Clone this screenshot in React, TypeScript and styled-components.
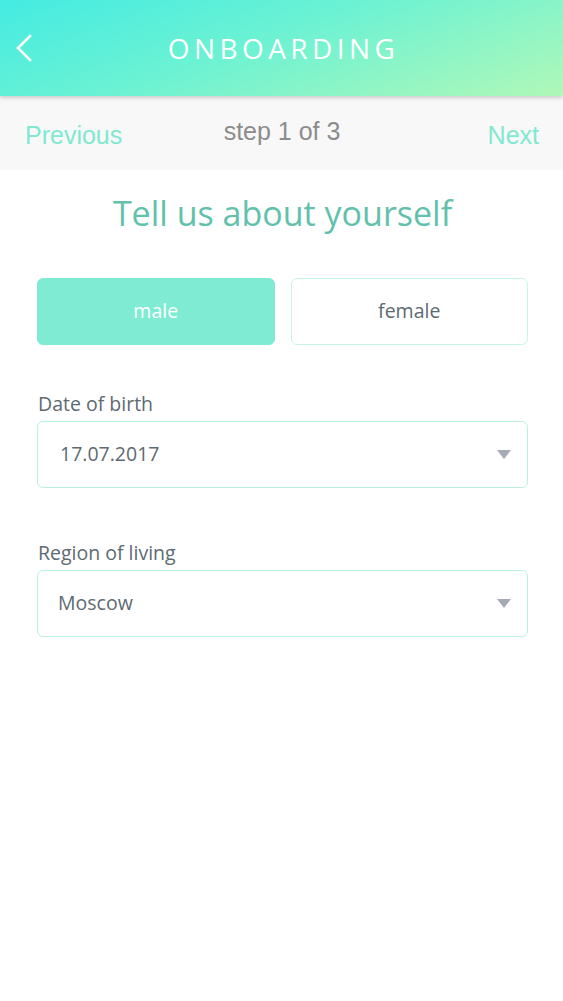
import styled, { createGlobalStyle } from "styled-components";

const GlobalStyle = createGlobalStyle`
  html, body {
    margin: 0;
    padding: 0;
    background: #ffffff;
  }
  * {
    box-sizing: border-box;
  }
`;

const Screen = styled.div`
  width: 563px;
  min-height: 1001px;
  background: #ffffff;
  font-family: "Open Sans", "Noto Sans", sans-serif;
`;

const Header = styled.header`
  position: relative;
  z-index: 1;
  height: 96px;
  display: flex;
  align-items: center;
  justify-content: center;
  background: linear-gradient(160deg, #44ebe2 0%, #6cf2d3 45%, #b0f8b8 100%);
  box-shadow: 0 2px 4px rgba(0, 0, 0, 0.18);
`;

const BackButton = styled.button`
  position: absolute;
  left: 12px;
  top: 32px;
  width: 24px;
  height: 32px;
  padding: 0;
  border: none;
  background: none;
  display: flex;
  align-items: center;
  justify-content: center;
`;

const HeaderTitle = styled.h1`
  margin: 0;
  padding-left: 4px;
  font-family: "Open Sans", sans-serif;
  font-weight: 400;
  font-size: 28px;
  letter-spacing: 4.4px;
  color: #ffffff;
`;

const StepBar = styled.nav`
  height: 74px;
  background: #f8f8f8;
  display: grid;
  grid-template-columns: 1fr auto 1fr;
  align-items: center;
  padding: 0 24px 0 25px;
  font-family: "Liberation Sans", Arial, sans-serif;
  font-size: 25px;
`;

const StepLink = styled.span<{ $align: "left" | "right" }>`
  color: #80e9cf;
  text-align: ${(p) => p.$align};
  margin-top: 4px;
`;

const StepCount = styled.span`
  color: #8c8c8c;
  margin-top: -3px;
`;

const Content = styled.main`
  padding: 18px 35px 0 37px;
  display: flex;
  flex-direction: column;
`;

const Title = styled.h2`
  margin: 0;
  text-align: center;
  font-weight: 400;
  font-size: 34px;
  color: #62c1ac;
  line-height: 50px;
`;

const GenderRow = styled.div`
  margin-top: 40px;
  display: grid;
  grid-template-columns: 1fr 1fr;
  gap: 16px;
`;

const GenderButton = styled.button<{ $active?: boolean }>`
  height: 67px;
  border-radius: 6px;
  font-family: "Open Sans", sans-serif;
  font-size: 19.5px;
  padding: 0 0 2px;
  border: 1.5px solid ${(p) => (p.$active ? "#7eebd2" : "#c6f6ea")};
  background: ${(p) => (p.$active ? "#7eebd2" : "#ffffff")};
  color: ${(p) => (p.$active ? "#ffffff" : "#5d6a72")};
`;

const Field = styled.div<{ $gap: number }>`
  margin-top: ${(p) => p.$gap}px;
  display: flex;
  flex-direction: column;
`;

const Label = styled.label`
  font-size: 19.5px;
  color: #5d6a72;
  line-height: 26px;
  margin-left: 1px;
  margin-bottom: 4px;
`;

const Select = styled.div<{ $indent: number }>`
  height: 67px;
  border: 1.5px solid #b9f1df;
  border-radius: 6px;
  display: flex;
  align-items: center;
  justify-content: space-between;
  padding: 0 16px 2px ${(p) => p.$indent}px;
  font-size: 19.5px;
  color: #5d6a72;
`;

const Caret = styled.span`
  width: 0;
  height: 0;
  margin-top: 2px;
  border-left: 7px solid transparent;
  border-right: 7px solid transparent;
  border-top: 9px solid #a6aab6;
`;

export default function App() {
  return (
    <Screen>
      <GlobalStyle />
      <Header>
        <BackButton aria-label="Back">
          <svg width="18" height="28" viewBox="0 0 18 28" fill="none">
            <path
              d="M15 2 L3 14 L15 26"
              stroke="#ffffff"
              strokeWidth="2.6"
              strokeLinecap="square"
            />
          </svg>
        </BackButton>
        <HeaderTitle>ONBOARDING</HeaderTitle>
      </Header>
      <StepBar>
        <StepLink $align="left">Previous</StepLink>
        <StepCount>step 1 of 3</StepCount>
        <StepLink $align="right">Next</StepLink>
      </StepBar>
      <Content>
        <Title>Tell us about yourself</Title>
        <GenderRow>
          <GenderButton $active>male</GenderButton>
          <GenderButton>female</GenderButton>
        </GenderRow>
        <Field $gap={46}>
          <Label>Date of birth</Label>
          <Select $indent={22}>
            <span>17.07.2017</span>
            <Caret />
          </Select>
        </Field>
        <Field $gap={52}>
          <Label>Region of living</Label>
          <Select $indent={20}>
            <span>Moscow</span>
            <Caret />
          </Select>
        </Field>
      </Content>
    </Screen>
  );
}
